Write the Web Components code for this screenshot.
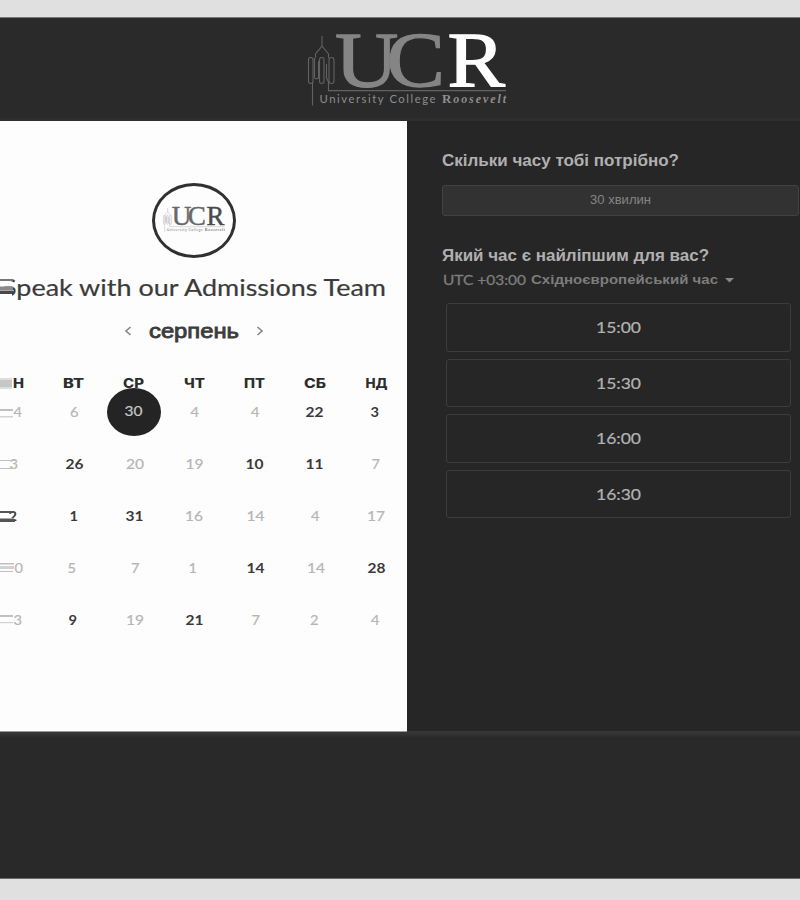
<!DOCTYPE html>
<html lang="uk">
<head>
<meta charset="utf-8">
<title>Speak with our Admissions Team</title>
<style>
html,body{margin:0;padding:0}
body{width:800px;height:900px;overflow:hidden;background:#e0e0e0;font-family:"Liberation Sans",Arial,sans-serif}
</style>
</head>
<body>
<booking-page></booking-page>
<script>
const LATIN='Lato, "Open Sans", sans-serif';
const ARIAL='"Liberation Sans", Arial, sans-serif';

/* One line of text set to an exact advance width. */
class FitText extends HTMLElement{
  constructor(){super();this.attachShadow({mode:'open'});}
  connectedCallback(){
    const g=(n,d)=>this.getAttribute(n)||d;
    const w=+g('w'),s=+g('size'),h=Math.round(s*1.3),f=g('face','latin')==='latin'?LATIN:g('face')==='inter'?'Inter, sans-serif':ARIAL;
    this.shadowRoot.innerHTML=`<style>:host{display:block;width:${w}px;height:${h}px}svg{display:block;overflow:visible}
      text{font:${g('weight','400')} ${s}px ${f};fill:currentColor;stroke:currentColor;stroke-width:${g('ink','0')}px}</style>
      <svg width="${w}" height="${h}"><text x="0" y="${s}" textLength="${w}" lengthAdjust="spacingAndGlyphs"></text></svg>`;
    this.shadowRoot.querySelector('text').textContent=g('text','');
  }
}
customElements.define('fit-text',FitText);

class UcrLogo extends HTMLElement{
  constructor(){super();this.attachShadow({mode:'open'}).innerHTML=`
  <style>:host{display:block}svg{display:block;width:100%;height:100%;overflow:visible}
  .cap{font-family:"Liberation Serif",serif;font-size:79px;stroke-width:1.3}
  .uc{fill:var(--uc,#858585);stroke:var(--uc,#858585)}.r{fill:var(--r,#fff);stroke:var(--r,#fff)}
  .ln{fill:none;stroke:var(--line,#626262);stroke-width:1.1}
  .sub{font:400 11.3px Lato,sans-serif;fill:var(--sub,#8d8d8d)}
  .roo{font:italic 700 12px "Liberation Serif",serif;fill:var(--sub,#8d8d8d)}.up{font-style:normal;font-size:13px}</style>
  <svg viewBox="307 33 200 73" preserveAspectRatio="none">
    <g class="ln"><path d="M322 36V46L315.5 54V58M322 46L328.5 54V58"/>
    <rect x="308.5" y="57.5" width="4.5" height="26" rx="2.2"/><path d="M314.5 58V77Q314.5 80 318.5 78V61"/>
    <rect x="319.5" y="57.5" width="4.5" height="26" rx="2.2"/><rect x="329" y="57.5" width="5" height="26" rx="2.4"/>
    <path d="M312.5 82V105.5M326.5 64V78L328.5 82V90.6H506"/></g>
    <text class="cap uc" transform="translate(335 86.3) scale(1.11 1)" x="0 46.5" y="0">UC</text>
    <text class="cap r" x="447.5" y="86.3" textLength="57.5" lengthAdjust="spacingAndGlyphs">R</text>
    <text class="sub" x="319.5" y="103" textLength="116" lengthAdjust="spacing">University College</text>
    <text class="roo" x="442" y="103" textLength="64" lengthAdjust="spacing"><tspan class="up">R</tspan>oosevelt</text>
  </svg>`;}
}
customElements.define('ucr-logo',UcrLogo);

/* Horizontal streaks where the content runs off the left edge. */
class EdgeStreak extends HTMLElement{
  constructor(){super();this.attachShadow({mode:'open'});}
  connectedCallback(){
    const bars=JSON.parse(this.getAttribute('bars'));
    this.shadowRoot.innerHTML=`<style>:host{position:absolute;left:0;top:0}svg{display:block;overflow:visible}</style>
    <svg width="20" height="20">${bars.map(([y,w,h,c])=>`<rect x="0" y="${y}" width="${w}" height="${h}" fill="${c}"/>`).join('')}</svg>`;
  }
}
customElements.define('edge-streak',EdgeStreak);

class CalendarDay extends HTMLElement{
  constructor(){super();this.attachShadow({mode:'open'});}
  connectedCallback(){
    const n=this.getAttribute('n'),k=this.getAttribute('kind'),dx=this.getAttribute('dx');
    const w=n.length>1?18:8.5,on=k==='on',sel=k==='sel';
    this.shadowRoot.innerHTML=`<style>:host{display:grid;place-items:center;color:${sel?'#c8c8c8':on?'#3a3a3a':'#b5b5b5'}}
     .disc{display:grid;place-items:center;width:54px;height:48px;border-radius:50%;${sel?'background:#242424':''}}
     fit-text{transform:translate(${dx-.4}px,${sel?-1:0}px)}</style>
     <div class="disc"><fit-text text="${n}" w="${w}" size="14" weight="${on?700:400}" ink="${on?0:.2}"></fit-text></div>`;
  }
}
customElements.define('calendar-day',CalendarDay);

class MonthCalendar extends HTMLElement{
  constructor(){
    super();
    const names=[['Н',11,5],['ВТ',21,0],['СР',21,0],['ЧТ',21,0],['ПТ',21,0],['СБ',22,0],['НД',22,.5]];
    const rows=[
     ['4,off,5','6,off,1.5','30,sel,0','4,off,1','4,off,.5','22,on,0','3,on,0'],
     ['3,off,1','26,on,1','20,off,1.5','19,off,1','10,on,0','11,on,0','7,off,1'],
     ['2,on,0','1,on,1','31,on,1','16,off,.5','14,off,1','4,off,.5','17,off,.5'],
     ['0,off,6','5,off,-1','7,off,1.5','1,off,-1','14,on,1','14,off,1.5','28,on,1'],
     ['3,off,5','9,on,0','19,off,1.5','21,on,1','7,off,1','2,off,-.5','4,off,.5']];
    this.attachShadow({mode:'open'}).innerHTML=`<style>
    :host{display:block;margin-left:-17px}
    .names,.days{display:grid;grid-template-columns:repeat(7,60.4px)}
    .names{height:18px;align-items:center;justify-items:center;color:#2d2d2d}
    .days{grid-auto-rows:51.8px;margin-top:-5.5px}</style>
    <div class="names">${names.map(([t,w,d])=>`<fit-text face="inter" text="${t}" w="${w}" size="12.5" weight="800" style="transform:translateX(${d}px)"></fit-text>`).join('')}</div>
    <div class="days">${rows.flat().map(c=>{const [n,k,d]=c.split(',');return `<calendar-day n="${n}" kind="${k}" dx="${d}"></calendar-day>`}).join('')}</div>`;
  }
}
customElements.define('month-calendar',MonthCalendar);

class MonthPanel extends HTMLElement{
  constructor(){
    super();
    const L='#c0c0c0',M='#d2d2d2',bars=[
      [279,13,2,'#777'],[281,11,5.5,'#fdfdfd'],[286.5,13,4,'#8a8a8a'],[290,14,1,'#aaa'],[291,13.5,3,'#484848'],[294,12,3,'#fdfdfd'],
      [378,12,2,'#dedede'],[380,12,7,'#c6c6c6'],[387,12,2,'#dedede'],
      [409,13,2,L],[416,13,1.5,M],[460,15,1,L],[468,15,1,L],
      [511,14,2,'#555'],[518,14,1,'#aaa'],[519,15,3,'#555'],
      [563,14,1.5,L],[566,14,3,M],[571,13,1,L],[615,13,2,L],[622,13,1.2,M]].map(([y,...r])=>[y-121,...r]);
    this.attachShadow({mode:'open'}).innerHTML=`<style>
    :host{display:block;position:relative;width:407px;height:610px;box-sizing:border-box;padding-top:62px;background:#fdfdfd;overflow:hidden}
    .badge{box-sizing:border-box;width:84px;height:75px;margin-left:152px;border:3px solid #303030;border-radius:50%;display:grid;place-items:center}
    ucr-logo{width:62px;height:25px;margin-top:-2px;--uc:#686868;--r:#4a4a4a;--line:#999;--sub:#777}
    .title{margin:15px 0 0 2px;color:#3b3b3b;height:31px}
    .month{display:flex;align-items:center;margin:13px 0 0 124px;height:27px;color:#3c3c3c}
    .month fit-text{margin:0 17px}
    .month svg{width:8px;height:10px;fill:none;stroke:#858585;stroke-width:1.6}
    month-calendar{margin-top:30px}</style>
    <div class="badge"><ucr-logo></ucr-logo></div>
    <div class="title"><fit-text text="Speak with our Admissions Team" w="384" size="22.5" ink=".2"></fit-text></div>
    <div class="month"><svg viewBox="0 0 8 10"><path d="M6.5 1L2 5L6.5 9"/></svg>
      <fit-text face="arial" text="серпень" w="90" size="20" ink=".8"></fit-text>
      <svg viewBox="0 0 8 10"><path d="M1.5 1L6 5L1.5 9"/></svg></div>
    <month-calendar></month-calendar>
    <edge-streak bars='${JSON.stringify(bars)}'></edge-streak>`;
  }
}
customElements.define('month-panel',MonthPanel);

class TimeSlot extends HTMLElement{
  constructor(){super();this.attachShadow({mode:'open'});}
  connectedCallback(){
    this.shadowRoot.innerHTML=`<style>:host{box-sizing:border-box;display:grid;place-items:center;height:48.5px;border:1.3px solid #3d3d3d;border-radius:3px;color:#b2b2b2}</style>
    <fit-text text="${this.getAttribute('time')}" w="45" size="15.5" ink=".2"></fit-text>`;
  }
}
customElements.define('time-slot',TimeSlot);

class TimePanel extends HTMLElement{
  constructor(){super();this.attachShadow({mode:'open'}).innerHTML=`<style>
    :host{display:block;box-sizing:border-box;width:393px;height:610px;background:#262626;padding:29px 0 0 35px;color:#b0b0b0}
    .duration{box-sizing:border-box;width:357px;height:31px;margin-top:14px;border:1px solid #424242;border-radius:3px;background:#323232;display:grid;place-items:center;color:#858585}
    .duration fit-text{transform:translateY(-1px)}
    .q2{margin-top:29px}
    .zone{display:flex;margin:5px 0 0 1px;height:18px;align-items:center;color:#7d7d7d}
    .zone .tz{margin-left:5px;transform:translateY(-1px)}.zone svg{width:9px;height:5px;margin-left:7px;fill:#888}
    .slots{display:grid;gap:7px;width:345px;margin:14px 0 0 4px}</style>
    <fit-text face="arial" text="Скільки часу тобі потрібно?" w="237" size="16" weight="700"></fit-text>
    <div class="duration"><fit-text face="arial" text="30 хвилин" w="61" size="12"></fit-text></div>
    <fit-text class="q2" face="arial" text="Який час є найліпшим для вас?" w="267" size="16" weight="700"></fit-text>
    <div class="zone"><fit-text text="UTC +03:00" w="83" size="13.5" ink=".3"></fit-text>
      <fit-text class="tz" face="arial" text="Східноєвропейський час" w="187" size="13.5" weight="700"></fit-text>
      <svg viewBox="0 0 9 5"><path d="M0 0H9L4.5 4.5Z"/></svg></div>
    <div class="slots"><time-slot time="15:00"></time-slot><time-slot time="15:30"></time-slot><time-slot time="16:00"></time-slot><time-slot time="16:30"></time-slot></div>`;}
}
customElements.define('time-panel',TimePanel);

class BookingPage extends HTMLElement{
  constructor(){super();this.attachShadow({mode:'open'}).innerHTML=`<style>
    :host{display:block;width:800px;height:862px;padding-top:17px}
    header{box-sizing:border-box;height:104px;padding:16px 0 0 307px;background:linear-gradient(#777 0 1px,#2a2a2a 1px 100px,#303030 103px,#2d2d2d)}
    header ucr-logo{width:200px;height:73px}
    main{display:flex}
    footer{height:148px;background:linear-gradient(#363636,#353535 2px,#292929 7px,#292929 147px,#6a6a6a 147px)}
    footer::before{content:"";display:block;width:407px;height:1px;background:#999}</style>
    <header><ucr-logo></ucr-logo></header>
    <main><month-panel></month-panel><time-panel></time-panel></main>
    <footer></footer>`;}
}
customElements.define('booking-page',BookingPage);
</script>
</body>
</html>
